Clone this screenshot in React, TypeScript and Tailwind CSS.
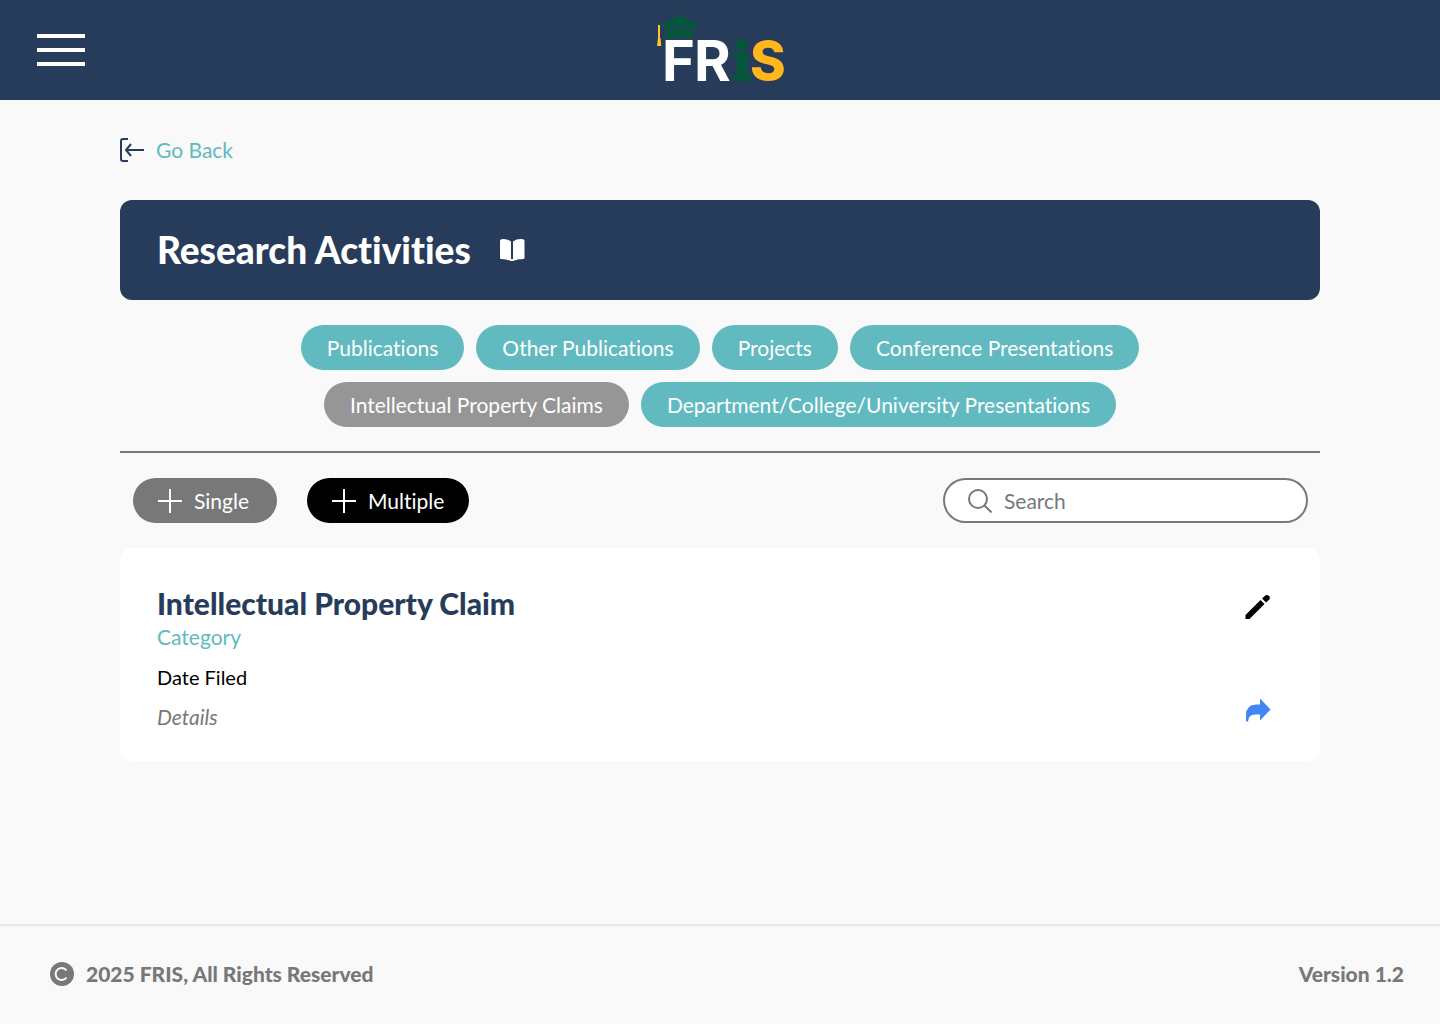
import React from "react";

const tabs = [
  { label: "Publications", active: false },
  { label: "Other Publications", active: false },
  { label: "Projects", active: false },
  { label: "Conference Presentations", active: false },
  { label: "Intellectual Property Claims", active: true },
  { label: "Department/College/University Presentations", active: false },
];

function Logo() {
  return (
    <svg width="144" height="96" viewBox="648 2 144 96" role="img" aria-label="FRIS">
      <path d="M659 25 L679.500 15.500 L700.500 25 L693.500 28 Q679.500 24.500 665.500 28 Z" fill="#04573a" />
      <path d="M666 29.500 Q679.500 26.500 693 29.500 V38 H666 Z" fill="#04573a" />
      <path d="M659 25 V38" stroke="#ffc629" strokeWidth="2" />
      <path d="M658 38 H660.500 L661.200 46 H657 Z" fill="#ffc629" />
      <text x="662" y="81" fontFamily="Inter" fontWeight="700" fontSize="56" fill="#ffffff">F</text>
      <text x="694" y="81" fontFamily="Inter" fontWeight="700" fontSize="56" fill="#ffffff">R</text>
      <text x="732" y="80" fontFamily="DejaVu Serif" fontWeight="700" fontSize="52" fill="#04573a" stroke="#04573a" strokeWidth="2">i</text>
      <text x="750" y="80" fontFamily="Inter" fontWeight="800" fontSize="54" fill="#ffb71b">S</text>
    </svg>
  );
}

function BackIcon() {
  return (
    <svg width="24" height="26" viewBox="0 0 24 26" fill="none" stroke="#273c5a" strokeWidth="2" aria-hidden="true">
      <path d="M8 2 H3 Q1 2 1 4 V22 Q1 24 3 24 H8" />
      <path d="M24 13 H6 M11 7 L6 13 L11 19" />
    </svg>
  );
}

function BookIcon() {
  return (
    <svg width="26" height="24" viewBox="0 0 26 24" fill="#fff" aria-hidden="true">
      <path d="M1 3 Q1 1.500 2.500 1.200 Q8 0.500 12 3.500 V23 Q8 21.200 2 21 Q1 21 1 20 Z" />
      <path d="M25.500 3 Q25.500 1.500 24 1.200 Q18 0.500 14 3.500 V23 Q18 21.200 24.500 21 Q25.500 21 25.500 20 Z" />
      <path d="M12 21 H14 V23 H12 Z" />
    </svg>
  );
}

function PlusIcon() {
  return (
    <svg width="24" height="24" viewBox="0 0 24 24" stroke="#fff" strokeWidth="2" aria-hidden="true">
      <path d="M12 0 V24 M0 12 H24" />
    </svg>
  );
}

function SearchIcon() {
  return (
    <svg width="24" height="24" viewBox="0 0 24 24" fill="none" stroke="#787878" strokeWidth="2" aria-hidden="true">
      <circle cx="10" cy="10" r="9" />
      <path d="M16.500 16.500 L23.500 23.500" />
    </svg>
  );
}

function PencilIcon() {
  return (
    <svg width="26" height="26" viewBox="0 0 26 26" aria-hidden="true">
      <path d="M0.500 21 L15.500 6 L19.500 10 L4.500 25 H0.500 Z" />
      <path d="M17 4.500 L20.300 1.500 Q21.500 0.500 23 1.200 L24.500 2.500 Q25.500 4 24.300 5.500 L21 8.500 Z" />
    </svg>
  );
}

function ShareIcon() {
  return (
    <svg width="26" height="24" viewBox="0 0 26 24" fill="#4285f4" aria-hidden="true">
      <path d="M15 0.500 L25.500 11.500 L15 22.500 V16.500 H10 Q3.500 16.500 3 23.500 H1 V17 Q1 7 11 6.500 H15 Z" />
    </svg>
  );
}

function CopyrightIcon() {
  return (
    <svg width="24" height="24" viewBox="0 0 24 24" fill="none" aria-hidden="true">
      <circle cx="12" cy="12" r="12" fill="#787878" />
      <path d="M16.500 8.500 A6 6 0 1 0 16.500 15.500" stroke="#f9f9f9" strokeWidth="2" />
    </svg>
  );
}

export default function App() {
  return (
    <div className="flex min-h-screen flex-col bg-[#f9f9f9] font-[Lato,sans-serif] text-[21px] leading-6 text-black [font-variant-ligatures:no-common-ligatures]">
      <header className="grid h-[100px] grid-cols-[1fr_auto_1fr] items-center bg-[#273c5a] px-9">
        <button type="button" aria-label="Menu" className="flex w-[50px] flex-col gap-2.5 px-px">
          <span className="h-1 w-full bg-white" />
          <span className="h-1 w-full bg-white" />
          <span className="h-1 w-full bg-white" />
        </button>
        <Logo />
      </header>

      <main className="mx-auto w-full max-w-[1200px] flex-1">
        <a href="#back" className="mt-[37px] flex w-fit items-center gap-3 text-[#60bac0]">
          <BackIcon />
          Go Back
        </a>

        <div className="mt-[37px] flex h-[100px] items-center gap-7 rounded-xl bg-[#273c5a] px-[37px] text-white">
          <h1 className="text-[37px] leading-11 font-black">Research Activities</h1>
          <BookIcon />
        </div>

        <nav aria-label="Research activities" className="mx-auto flex max-w-[900px] flex-wrap justify-center gap-3 pt-[25px] pb-6">
          {tabs.map((tab) => (
            <button
              key={tab.label}
              type="button"
              aria-pressed={tab.active}
              className={
                tab.active
                  ? "h-[45px] rounded-full bg-[#969696] px-[26px] text-white"
                  : "h-[45px] rounded-full bg-[#60bac0] px-[26px] text-white"
              }
            >
              {tab.label}
            </button>
          ))}
        </nav>
        <hr className="border-t-2 border-[#787878]" />

        <div className="flex flex-wrap items-center py-[25px] pr-3 pl-[13px]">
          <button type="button" className="mr-[30px] flex h-[45px] items-center gap-3 rounded-full bg-[#787878] pr-7 pl-[25px] text-white">
            <PlusIcon />
            Single
          </button>
          <button type="button" className="flex h-[45px] items-center gap-3 rounded-full bg-black px-[25px] text-white">
            <PlusIcon />
            Multiple
          </button>
          <label className="ml-auto flex h-[45px] w-[365px] items-center gap-3 rounded-full border-2 border-[#787878] bg-white px-[23px]">
            <SearchIcon />
            <input type="text" aria-label="Search" placeholder="Search" className="min-w-0 flex-1 bg-transparent outline-none placeholder:text-[#787878]" />
          </label>
        </div>

        <article className="flex justify-between rounded-xl bg-white pt-[37px] pr-[49px] pb-8 pl-[37px]">
          <div>
            <h2 className="text-[30px] leading-9 font-black text-[#273c5a]">Intellectual Property Claim</h2>
            <p className="mt-1 text-[#60bac0]">Category</p>
            <p className="mt-4 text-[20px]">Date Filed</p>
            <p className="mt-4 text-[#787878] italic">Details</p>
          </div>
          <div className="flex flex-col justify-between pt-[9px] pb-[7px]">
            <button type="button" aria-label="Edit"><PencilIcon /></button>
            <button type="button" aria-label="Share"><ShareIcon /></button>
          </div>
        </article>
      </main>

      <footer className="flex h-[100px] items-center justify-between border-t-2 border-[#e8e8e8] pr-9 pb-0.5 pl-[50px] font-black text-[#787878]">
        <p className="flex items-center gap-3">
          <CopyrightIcon />
          2025 FRIS, All Rights Reserved
        </p>
        <p>Version 1.2</p>
      </footer>
    </div>
  );
}
